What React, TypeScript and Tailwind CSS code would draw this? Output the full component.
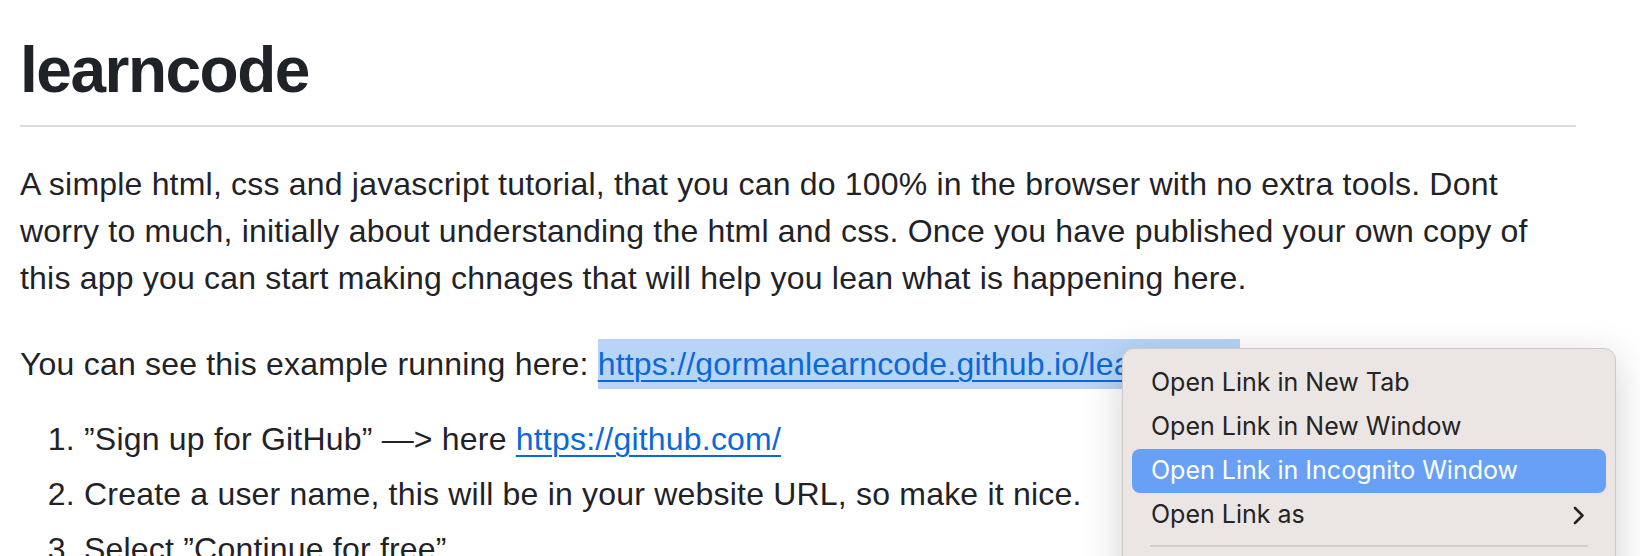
import React from 'react';

const menuItems = [
  { label: 'Open Link in New Tab' },
  { label: 'Open Link in New Window' },
  { label: 'Open Link in Incognito Window', active: true },
  { label: 'Open Link as', submenu: true },
];

const ContextMenu: React.FC = () => (
  <div className="absolute left-[1122px] top-[348px] w-[494px] rounded-[12px] border border-[#cfcac7] bg-[#ebe6e3] px-[9px] pt-[12px] pb-3 shadow-[0_10px_40px_rgba(0,0,0,0.18)] font-['Inter','Liberation_Sans',sans-serif] text-[25px] text-[#242424]">
    {menuItems.map((item) => (
      <div
        key={item.label}
        className={
          item.active
            ? 'flex h-[44px] items-center justify-between rounded-[8px] bg-[#68a0f6] pl-[19px] pr-[21px] text-white'
            : 'flex h-[44px] items-center justify-between rounded-[8px] pl-[19px] pr-[21px]'
        }
      >
        <span>{item.label}</span>
        {item.submenu && (
          <svg width="12" height="19" viewBox="0 0 12 19" fill="none">
            <path d="M2 2l7.5 7.5L2 17" stroke="#242424" strokeWidth="2.6" strokeLinecap="round" strokeLinejoin="round" />
          </svg>
        )}
      </div>
    ))}
    <div className="mx-[18px] mt-[8px] mb-[10px] h-[2px] bg-[#d3ceca]" />
    <div className="flex h-[44px] items-center pl-[19px]">Save Link As…</div>
    <div className="flex h-[44px] items-center pl-[19px]">Copy Link Address</div>
  </div>
);

const App: React.FC = () => {
  return (
    <div className="relative h-[556px] w-[1640px] overflow-hidden bg-white font-['Liberation_Sans',Arial,sans-serif] text-[#1f2328]">
      <div className="ml-[20px] w-[1556px] pt-[30px]">
        {/* Title */}
        <h1 className="border-b-2 border-[#d8dee4] pb-[15px] text-[64px] font-bold leading-[80px] tracking-[-1.5px]">
          learncode
        </h1>

        <p className="mt-[34px] text-[32px] leading-[47px] tracking-[0.2px]">
          A simple html, css and javascript tutorial, that you can do 100% in the browser with no extra tools. Dont
          worry to much, initially about understanding the html and css. Once you have published your own copy of
          this app you can start making chnages that will help you lean what is happening here.
        </p>

        <p className="mt-[39px] text-[32px] leading-[47px] tracking-[0.2px]">
          You can see this example running here:{' '}
          <a
            href="#"
            className="bg-[#b8d5f7] py-[7px] text-[#0969da] underline decoration-2 underline-offset-[5px]"
          >
            https://gormanlearncode.github.io/learncode/
          </a>
        </p>

        <ol className="mt-[28px] list-decimal pl-[64px] text-[32px] leading-[47px] tracking-[0.2px]">
          <li>
            ”Sign up for GitHub” —&gt; here{' '}
            <a href="#" className="text-[#0969da] underline decoration-2 underline-offset-[5px]">
              https://github.com/
            </a>
          </li>
          <li className="mt-[8px]">Create a user name, this will be in your website URL, so make it nice.</li>
          <li className="mt-[8px]">Select ”Continue for free”</li>
        </ol>
      </div>

      <ContextMenu />
    </div>
  );
};

export default App;
